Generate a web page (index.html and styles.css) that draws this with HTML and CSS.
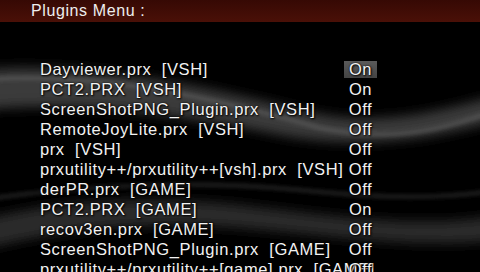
FILE: index.html
```html
<!DOCTYPE html>
<html>
<head>
  <title>Plugins Menu</title>
  <link rel="stylesheet" href="styles.css">
</head>
<body>
  <div class="screen">
    <svg class="wave" width="480" height="272" viewBox="0 0 480 272">
      <defs>
        <filter id="blur" x="-20%" y="-50%" width="140%" height="200%">
          <feGaussianBlur stdDeviation="6"/>
        </filter>
        <filter id="soft" x="-20%" y="-50%" width="140%" height="200%">
          <feGaussianBlur stdDeviation="2"/>
        </filter>
      </defs>
      <path d="M-20 70 C 80 60, 200 85, 300 110 C 380 130, 440 110, 500 95 L 500 120 C 430 140, 360 150, 280 135 C 180 115, 80 100, -20 110 Z" fill="#3a3a3a" filter="url(#blur)"/>
      <path d="M-20 80 C 100 70, 220 100, 320 128 C 400 145, 450 125, 500 110" stroke="#5a5a5a" stroke-width="3" fill="none" filter="url(#soft)"/>
      <path d="M-20 220 C 60 200, 140 195, 240 205 C 330 215, 420 230, 500 215 L 500 240 C 420 250, 330 235, 240 228 C 140 220, 60 230, -20 250 Z" fill="#2c2c2c" filter="url(#blur)"/>
      <path d="M-20 200 C 80 185, 200 180, 300 190 C 380 198, 440 200, 500 190" stroke="#404040" stroke-width="2" fill="none" filter="url(#soft)"/>
    </svg>

    <div class="header">Plugins Menu :</div>

    <ul class="plugins">
      <li><span class="name">Dayviewer.prx  [VSH]</span><span class="value selected">On</span></li>
      <li><span class="name">PCT2.PRX  [VSH]</span><span class="value">On</span></li>
      <li><span class="name">ScreenShotPNG_Plugin.prx  [VSH]</span><span class="value">Off</span></li>
      <li><span class="name">RemoteJoyLite.prx  [VSH]</span><span class="value">Off</span></li>
      <li><span class="name">prx  [VSH]</span><span class="value">Off</span></li>
      <li><span class="name">prxutility++/prxutility++[vsh].prx  [VSH]</span><span class="value">Off</span></li>
      <li><span class="name">derPR.prx  [GAME]</span><span class="value">Off</span></li>
      <li><span class="name">PCT2.PRX  [GAME]</span><span class="value">On</span></li>
      <li><span class="name">recov3en.prx  [GAME]</span><span class="value">Off</span></li>
      <li><span class="name">ScreenShotPNG_Plugin.prx  [GAME]</span><span class="value">Off</span></li>
      <li><span class="name">prxutility++/prxutility++[game].prx  [GAME]</span><span class="value">Off</span></li>
    </ul>
  </div>
</body>
</html>
```

FILE: styles.css
```css
body {
  margin: 0;
  padding: 0;
  background: #000000;
  font-family: "Liberation Sans", Arial, sans-serif;
  color: #f2f2f2;
}

.screen {
  position: relative;
  width: 480px;
  height: 272px;
  overflow: hidden;
  background: #000000;
}

.wave {
  position: absolute;
  left: 0;
  top: 0;
}

.header {
  position: relative;
  height: 22px;
  line-height: 22px;
  padding-left: 31px;
  font-size: 16px;
  letter-spacing: 0.6px;
  background: linear-gradient(to bottom, #360904, #4a1007);
  color: #eeeeee;
}

.plugins {
  position: relative;
  list-style-type: none;
  margin: 37px 0 0 0;
  padding: 0 0 0 40px;
}

.plugins li {
  display: flex;
  height: 20px;
  line-height: 20px;
  font-size: 16.5px;
  letter-spacing: 0.6px;
  white-space: pre;
  text-shadow: 0 0 2px #000000, 1px 1px 2px #000000;
}

.name {
  width: 304px;
  flex-shrink: 0;
}

.value {
  width: 33px;
  text-align: center;
}

.selected {
  background: linear-gradient(to bottom, #5a5a5a, #444444);
  height: 17px;
  line-height: 17px;
  margin-top: 2px;
}
```
